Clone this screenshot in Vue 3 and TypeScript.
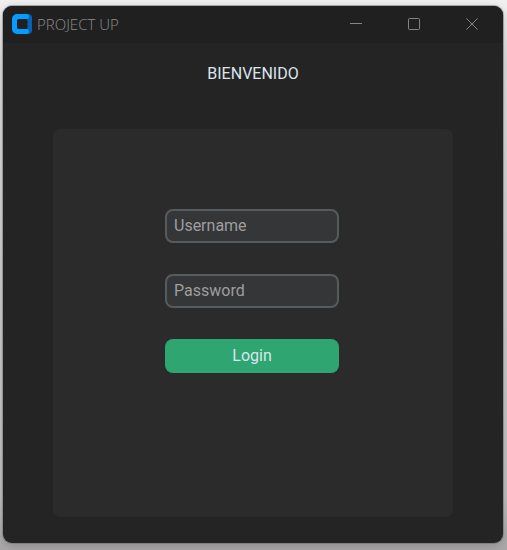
<script setup lang="ts">
import { ref } from 'vue'

const username = ref<string>('')
const password = ref<string>('')
</script>

<template>
  <div class="desktop">
    <div class="window">
      <header class="titlebar">
        <svg class="logo" viewBox="0 0 20 20" aria-hidden="true">
          <path d="M12 0h4a4 4 0 0 1 4 4v12a4 4 0 0 1-4 4h-4z" fill="#0662b4" />
          <path
            fill="#069cff"
            d="M5 0h9.500a2.500 2.500 0 0 1 0 5h-1v10h1a2.500 2.500 0 0 1 0 5H5a5 5 0 0 1-5-5V5a5 5 0 0 1 5-5z"
          />
          <rect x="5" y="5" width="10.500" height="10" rx="1.500" fill="#202020" />
        </svg>
        <span class="title">PROJECT UP</span>
        <div class="controls">
          <button type="button" class="control" aria-label="Minimize">
            <svg viewBox="0 0 12 12"><path d="M0 5.500h12" /></svg>
          </button>
          <button type="button" class="control" aria-label="Maximize">
            <svg viewBox="0 0 12 12"><rect x="0.500" y="0.500" width="11" height="11" rx="1" /></svg>
          </button>
          <button type="button" class="control" aria-label="Close">
            <svg viewBox="0 0 12 12"><path d="M0.300 0.300l11.400 11.400M11.700 0.300L0.300 11.700" /></svg>
          </button>
        </div>
      </header>
      <main class="content">
        <h1 class="heading">BIENVENIDO</h1>
        <form class="panel" @submit.prevent>
          <input v-model="username" class="field" type="text" placeholder="Username" aria-label="Username" />
          <input v-model="password" class="field" type="password" placeholder="Password" aria-label="Password" />
          <button class="login" type="submit">Login</button>
        </form>
      </main>
    </div>
  </div>
</template>

<style>
body {
  margin: 0;
}
</style>

<style scoped>
.desktop {
  box-sizing: border-box;
  display: flex;
  min-height: 100vh;
  padding: 6px 4px 7px 3px;
  background: linear-gradient(#f0f0f0, #dcdcdc 12%, #c0c0c0 90%, #a8a6a7);
  font-family: Roboto, "Liberation Sans", sans-serif;
  overflow: hidden;
}

.window {
  display: flex;
  flex: 1;
  flex-direction: column;
  border-radius: 9px;
  background: #242424;
  box-shadow: 0 0 0 1px rgba(110, 110, 110, 0.5), 0 2px 8px rgba(0, 0, 0, 0.2);
  overflow: hidden;
}

.titlebar {
  box-sizing: border-box;
  display: flex;
  align-items: center;
  height: 37px;
  padding: 0 2px 1px 9px;
  background: #202020;
}

.logo {
  width: 20px;
  height: 20px;
}

.title {
  margin-left: 5px;
  color: #8c8c8c;
  font: 300 15px/20px "Open Sans", "Noto Sans", sans-serif;
}

.controls {
  display: flex;
  height: 36px;
  margin-left: auto;
}

.control {
  display: grid;
  place-items: center;
  width: 58px;
  padding: 0;
  border: 0;
  background: transparent;
}

.control svg {
  width: 12px;
  height: 12px;
  fill: none;
  stroke: #858585;
  stroke-width: 1;
}

.content {
  display: flex;
  flex: 1;
  flex-direction: column;
  padding: 20px 50px 26px;
}

.heading {
  margin: 0 0 44px;
  color: #dce4ee;
  font-size: 16px;
  font-weight: 400;
  line-height: 22px;
  text-align: center;
}

.panel {
  display: flex;
  flex: 1;
  flex-direction: column;
  align-items: center;
  gap: 31px;
  padding: 80px 2px 0 0;
  border-radius: 7px;
  background: #2b2b2b;
}

.field,
.login {
  box-sizing: border-box;
  width: 174px;
  height: 34px;
  border-radius: 8px;
  font: inherit;
  font-size: 16px;
}

.field {
  padding: 0 7px 2px;
  border: 2px solid #565b5e;
  background: #343638;
  color: #dce4ee;
  outline: none;
}

.field::placeholder {
  color: #9e9e9e;
  opacity: 1;
}

.login {
  padding: 0 0 2px;
  border: 0;
  background: #2fa572;
  color: #dce4ee;
}
</style>
